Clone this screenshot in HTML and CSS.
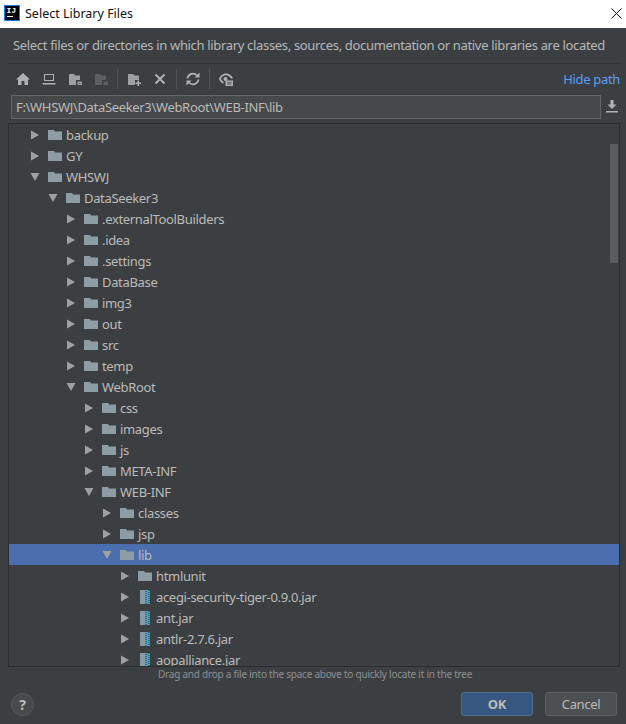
FILE: index.html
```html
<!DOCTYPE html>
<html lang="en">
<head>
<meta charset="utf-8">
<title>Select Library Files</title>
<link rel="stylesheet" href="styles.css">
</head>
<body>
<svg class="defs" width="0" height="0" aria-hidden="true">
  <symbol id="folder" viewBox="0 0 14 10"><path d="M0 0h6l1 1.500h7V10H0z" fill="#8e9ca6"/></symbol>
  <symbol id="jar" viewBox="0 0 10 14"><rect x="0" y="0" width="5" height="14" fill="#8a9ba6"/><rect x="5" y="0" width="5" height="14" fill="#3a6c80"/><path d="M5 0h3v1H5zM7 1h3v1H7zM5 2h3v1H5zM7 3h3v1H7zM5 4h3v1H5zM7 5h3v1H7zM5 6h3v1H5zM7 7h3v1H7zM5 8h3v1H5zM7 9h3v1H7zM5 10h3v1H5zM7 11h3v1H7zM5 12h3v1H5zM7 13h3v1H7z" fill="#40a8cc"/></symbol>
  <symbol id="right" viewBox="0 0 10 10"><path d="M1 .5l8 4.500-8 4.500z" fill="#a0a0a0"/></symbol>
  <symbol id="down" viewBox="0 0 10 10"><path d="M.5 1h9L5 9z" fill="#a0a0a0"/></symbol>
</svg>
<div class="titlebar">
  <svg class="appicon" width="16" height="16" viewBox="0 0 16 16"><rect width="16" height="16" fill="#087cfa"/><rect x="1" y="1" width="14" height="14" fill="#000"/><rect x="3" y="11" width="6" height="1" fill="#fff"/><text x="2.500" y="8" class="appicon-text">IJ</text></svg>
  <span class="title">Select Library Files</span>
  <svg class="close" width="11" height="11" viewBox="0 0 11 11"><path d="M.5.5l10 10M10.500.5l-10 10" stroke="#111" fill="none"/></svg>
</div>
<main class="dialog">
  <p class="desc">Select files or directories in which library classes, sources, documentation or native libraries are located</p>
  <div class="toolbar">
    <div class="tools">
      <svg class="tool" viewBox="0 0 16 16"><path d="M8 2L1 8.500h2V14h3.500v-4h3v4H13V8.500h2z" fill="#afb1b3"/></svg>
      <svg class="tool" viewBox="0 0 16 16"><path d="M3 3h10v7H3zM4 4v5h8V4z M1.500 12h13v1.500h-13z" fill="#afb1b3" fill-rule="evenodd"/></svg>
      <svg class="tool" viewBox="0 0 16 16"><path d="M2 3h5l1.500 1.500H13V9H9v5H2z" fill="#9aa0a4"/><path d="M10.500 10.500H15V14h-4.500zM12 12v.8h1.500V12z" fill="#9aa0a4" fill-rule="evenodd"/></svg>
      <svg class="tool" viewBox="0 0 16 16"><path d="M2 3h5l1.500 1.500H13V9H9v5H2z" fill="#5c5e60"/><path d="M10.500 10.500H15V14h-4.500z" fill="#5c5e60"/></svg>
      <span class="sep"></span>
      <svg class="tool" viewBox="0 0 16 16"><path d="M2 3h5l1.500 1.500H13V9H9v5H2z" fill="#9aa0a4"/><path d="M11.500 9.500h1.500v2h2V13h-2v2h-1.500v-2h-2v-1.500h2z" fill="#afb1b3"/></svg>
      <svg class="tool" viewBox="0 0 16 16"><path d="M3.500 3.500l9 9M12.500 3.500l-9 9" stroke="#afb1b3" stroke-width="2" fill="none"/></svg>
      <span class="sep"></span>
      <svg class="tool" viewBox="0 0 16 16"><path d="M2.500 7.500a5.500 5.500 0 0 1 9.500-3M13.500 8.500a5.500 5.500 0 0 1-9.500 3" stroke="#afb1b3" stroke-width="1.800" fill="none"/><path d="M9.500 6.500h5v-5zM6.500 9.500h-5v5z" fill="#afb1b3"/></svg>
      <span class="sep"></span>
      <svg class="tool" viewBox="0 0 16 16"><path d="M8 2.500C4.500 2.500 2 5 1 8c.7 2 2.200 3.800 4.500 4.800V10.500C4 9.800 3.200 9 2.800 8 3.800 5.700 5.700 4.200 8 4.200c2 0 3.800 1.200 4.800 3.300H15C14 4.600 11.500 2.500 8 2.500z" fill="#afb1b3"/><circle cx="7.500" cy="8" r="2" fill="#afb1b3"/><path d="M7.500 9.500H15V15H7.500zM9 11v.8h4.500V11zM9 12.800v.8h4.500v-.8z" fill="#afb1b3" fill-rule="evenodd"/></svg>
    </div>
    <a class="hide-path">Hide path</a>
  </div>
  <div class="pathrow">
    <div class="pathfield">F:\WHSWJ\DataSeeker3\WebRoot\WEB-INF\lib</div>
    <svg class="download" width="12" height="13" viewBox="0 0 12 13"><path d="M4.500 0h3v4.500h3L6 9 1.500 4.500h3zM0 11h12v1.500H0z" fill="#afb1b3"/></svg>
  </div>
  <div class="tree">
    <div class="row d0"><svg class="arrow"><use href="#right"/></svg><svg class="ico"><use href="#folder"/></svg><span>backup</span></div>
    <div class="row d0"><svg class="arrow"><use href="#right"/></svg><svg class="ico"><use href="#folder"/></svg><span>GY</span></div>
    <div class="row d0"><svg class="arrow"><use href="#down"/></svg><svg class="ico"><use href="#folder"/></svg><span>WHSWJ</span></div>
    <div class="row d1"><svg class="arrow"><use href="#down"/></svg><svg class="ico"><use href="#folder"/></svg><span>DataSeeker3</span></div>
    <div class="row d2"><svg class="arrow"><use href="#right"/></svg><svg class="ico"><use href="#folder"/></svg><span>.externalToolBuilders</span></div>
    <div class="row d2"><svg class="arrow"><use href="#right"/></svg><svg class="ico"><use href="#folder"/></svg><span>.idea</span></div>
    <div class="row d2"><svg class="arrow"><use href="#right"/></svg><svg class="ico"><use href="#folder"/></svg><span>.settings</span></div>
    <div class="row d2"><svg class="arrow"><use href="#right"/></svg><svg class="ico"><use href="#folder"/></svg><span>DataBase</span></div>
    <div class="row d2"><svg class="arrow"><use href="#right"/></svg><svg class="ico"><use href="#folder"/></svg><span>img3</span></div>
    <div class="row d2"><svg class="arrow"><use href="#right"/></svg><svg class="ico"><use href="#folder"/></svg><span>out</span></div>
    <div class="row d2"><svg class="arrow"><use href="#right"/></svg><svg class="ico"><use href="#folder"/></svg><span>src</span></div>
    <div class="row d2"><svg class="arrow"><use href="#right"/></svg><svg class="ico"><use href="#folder"/></svg><span>temp</span></div>
    <div class="row d2"><svg class="arrow"><use href="#down"/></svg><svg class="ico"><use href="#folder"/></svg><span>WebRoot</span></div>
    <div class="row d3"><svg class="arrow"><use href="#right"/></svg><svg class="ico"><use href="#folder"/></svg><span>css</span></div>
    <div class="row d3"><svg class="arrow"><use href="#right"/></svg><svg class="ico"><use href="#folder"/></svg><span>images</span></div>
    <div class="row d3"><svg class="arrow"><use href="#right"/></svg><svg class="ico"><use href="#folder"/></svg><span>js</span></div>
    <div class="row d3"><svg class="arrow"><use href="#right"/></svg><svg class="ico"><use href="#folder"/></svg><span>META-INF</span></div>
    <div class="row d3"><svg class="arrow"><use href="#down"/></svg><svg class="ico"><use href="#folder"/></svg><span>WEB-INF</span></div>
    <div class="row d4"><svg class="arrow"><use href="#right"/></svg><svg class="ico"><use href="#folder"/></svg><span>classes</span></div>
    <div class="row d4"><svg class="arrow"><use href="#right"/></svg><svg class="ico"><use href="#folder"/></svg><span>jsp</span></div>
    <div class="row d4 selected"><svg class="arrow"><use href="#down"/></svg><svg class="ico"><use href="#folder"/></svg><span>lib</span></div>
    <div class="row d5"><svg class="arrow"><use href="#right"/></svg><svg class="ico"><use href="#folder"/></svg><span>htmlunit</span></div>
    <div class="row d5"><svg class="arrow"><use href="#right"/></svg><svg class="ico jar"><use href="#jar"/></svg><span>acegi-security-tiger-0.9.0.jar</span></div>
    <div class="row d5"><svg class="arrow"><use href="#right"/></svg><svg class="ico jar"><use href="#jar"/></svg><span>ant.jar</span></div>
    <div class="row d5"><svg class="arrow"><use href="#right"/></svg><svg class="ico jar"><use href="#jar"/></svg><span>antlr-2.7.6.jar</span></div>
    <div class="row d5"><svg class="arrow"><use href="#right"/></svg><svg class="ico jar"><use href="#jar"/></svg><span>aopalliance.jar</span></div>
    <div class="scrollbar"></div>
  </div>
  <p class="hint">Drag and drop a file into the space above to quickly locate it in the tree</p>
  <div class="footer">
    <div class="help">?</div>
    <div class="buttons">
      <div class="btn primary">OK</div>
      <div class="btn">Cancel</div>
    </div>
  </div>
</main>
</body>
</html>
```

FILE: styles.css
```css
* { box-sizing: border-box; }
html, body { margin: 0; height: 100%; }
body {
  display: flex;
  flex-direction: column;
  height: 724px;
  overflow: hidden;
  background: #3c3f41;
  font-family: "Noto Sans", "Open Sans", sans-serif;
  font-size: 13px;
  letter-spacing: -0.33px;
  color: #bbbbbb;
}
.defs { position: absolute; }
.titlebar {
  flex: none;
  height: 28px;
  background: #fff;
  display: flex;
  align-items: center;
  padding: 0 4px 2px 4px;
  color: #111;
}
.appicon { flex: none; margin-right: 5px; }
.appicon-text { font: bold 8px "Liberation Mono", monospace; fill: #fff; letter-spacing: 0; }
.title { flex: 1; font-size: 12.500px; letter-spacing: 0; }
.dialog {
  flex: 1;
  min-height: 0;
  display: flex;
  flex-direction: column;
  padding: 0 6px 8px 8px;
}
.desc {
  margin: 0;
  height: 36px;
  line-height: 34px;
  padding-left: 5px;
  border-bottom: 1px solid #323232;
  white-space: nowrap;
  color: #b4b8ba;
}
.toolbar {
  flex: none;
  height: 30px;
  display: flex;
  align-items: center;
  justify-content: space-between;
}
.tools { display: flex; align-items: center; padding-left: 7px; }
.tool { width: 16px; height: 16px; margin-right: 10px; flex: none; }
.sep { width: 1px; height: 20px; background: #515355; margin: 0 8px 0 -2px; flex: none; }
.hide-path { color: #589df6; }
.pathrow {
  flex: none;
  height: 25px;
  display: flex;
  align-items: center;
  padding-left: 3px;
}
.pathfield {
  width: 590px;
  height: 24px;
  line-height: 22px;
  padding-left: 4px;
  background: #45494a;
  border: 1px solid #646464;
  color: #bbbbbb;
  white-space: nowrap;
}
.download { margin-left: 5px; flex: none; }
.tree {
  position: relative;
  flex: none;
  height: 544px;
  margin-top: 4px;
  border: 1px solid #2b2d2e;
  overflow: hidden;
}
.row {
  height: 21px;
  display: flex;
  align-items: center;
  white-space: nowrap;
}
.d0 { padding-left: 21px; }
.d1 { padding-left: 39px; }
.d2 { padding-left: 57px; }
.d3 { padding-left: 75px; }
.d4 { padding-left: 93px; }
.d5 { padding-left: 111px; }
.arrow { width: 10px; height: 10px; flex: none; margin-right: 8px; }
.ico { width: 14px; height: 10px; flex: none; margin-right: 4px; }
.ico.jar { width: 10px; height: 14px; margin: 0 6px 0 2px; }
.selected { background: #4b6eaf; color: #bbbbbb; }
.scrollbar {
  position: absolute;
  right: 1px;
  top: 20px;
  width: 8px;
  height: 119px;
  background: #5a5d5f;
}
.hint {
  flex: none;
  margin: 0;
  height: 16px;
  line-height: 15px;
  padding-left: 150px;
  font-size: 10px;
  letter-spacing: -0.23px;
  color: #8c8f91;
  white-space: nowrap;
}
.footer {
  flex: 1;
  display: flex;
  align-items: flex-end;
  justify-content: space-between;
}
.help {
  width: 23px;
  height: 23px;
  margin: 0 0 0 3px;
  border-radius: 50%;
  background: #474a4c;
  border: 1px solid #55585a;
  text-align: center;
  line-height: 21px;
  font-weight: 700;
  font-size: 14px;
  color: #bbbbbb;
}
.buttons { display: flex; gap: 12px; padding-right: 3px; }
.btn {
  width: 72px;
  height: 24px;
  border-radius: 3px;
  border: 1px solid #5e6060;
  background: #4c5052;
  text-align: center;
  line-height: 22px;
  color: #bbbbbb;
}
.btn.primary {
  background: #365880;
  border-color: #4c708c;
  font-weight: 700;
}
```
